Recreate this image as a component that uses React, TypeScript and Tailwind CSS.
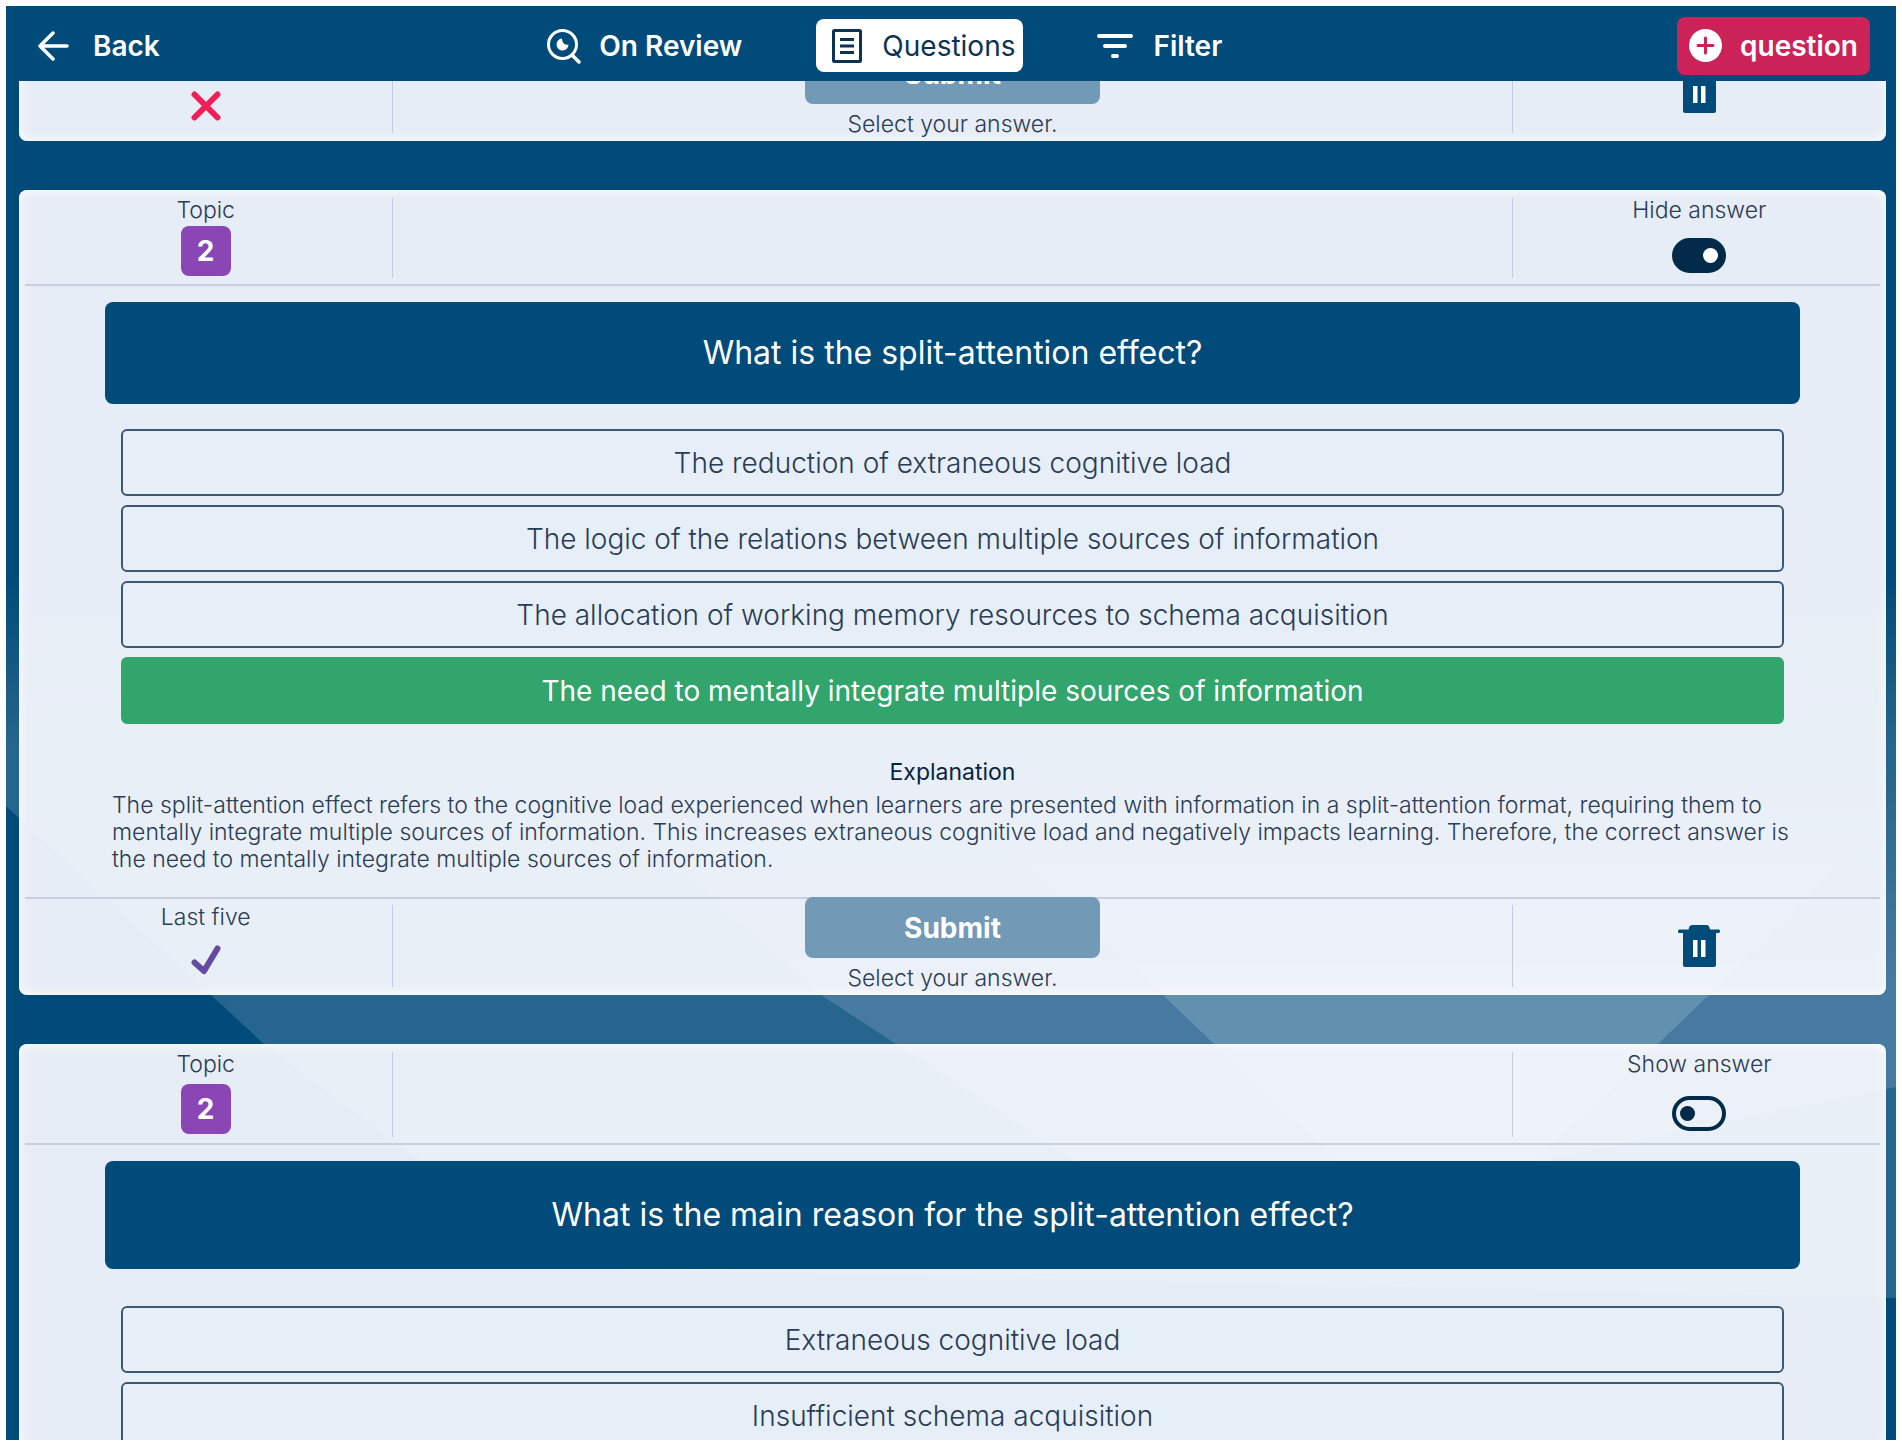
import { useState } from 'react';
import type { ReactNode } from 'react';

type Question = {
  id: number;
  topic: number;
  text: string;
  answers: string[];
  correct: number;
  explanation: string;
  lastFive: boolean;
};

const QUESTIONS: Question[] = [
  {
    id: 1,
    topic: 2,
    text: 'What is the split-attention effect?',
    answers: [
      'The reduction of extraneous cognitive load',
      'The logic of the relations between multiple sources of information',
      'The allocation of working memory resources to schema acquisition',
      'The need to mentally integrate multiple sources of information',
    ],
    correct: 3,
    explanation:
      'The split-attention effect refers to the cognitive load experienced when learners are presented with information in a split-attention format, requiring them to mentally integrate multiple sources of information. This increases extraneous cognitive load and negatively impacts learning. Therefore, the correct answer is the need to mentally integrate multiple sources of information.',
    lastFive: true,
  },
  {
    id: 2,
    topic: 2,
    text: 'What is the main reason for the split-attention effect?',
    answers: ['Extraneous cognitive load', 'Insufficient schema acquisition'],
    correct: 0,
    explanation: '',
    lastFive: true,
  },
];

function ReviewIcon() {
  return (
    <svg width="34" height="36" viewBox="0 0 34 36" fill="none" stroke="currentColor" strokeWidth="3">
      <circle cx="15.500" cy="16.500" r="14" />
      <path d="M25 27l7 7" strokeWidth="3.500" strokeLinecap="round" />
      <path d="M15 10.500a6 6 0 1 0 6.500 6c-3.500 1-6.500-1.500-6.500-6z" fill="currentColor" stroke="none" />
    </svg>
  );
}

function ListIcon() {
  return (
    <svg width="30" height="34" viewBox="0 0 30 34" fill="none" stroke="currentColor" strokeWidth="3">
      <rect x="1.500" y="1.500" width="27" height="31" rx="1" />
      <path d="M8 10.500h14M8 17h14M8 23.500h14" />
    </svg>
  );
}

function FilterIcon() {
  return (
    <svg width="36" height="26" viewBox="0 0 36 26" fill="none" stroke="currentColor" strokeWidth="4" strokeLinecap="round">
      <path d="M2 3h32M8 13h20M16 23h4" />
    </svg>
  );
}

function TrashIcon() {
  return (
    <svg width="42" height="42" viewBox="0 0 42 42" fill="currentColor">
      <path d="M11 2.500Q11.500 0 14 0h15q2 0 2.500 2.500L32 4.500h9q1 0 1 1.500t-1 2h-3v32q0 2-2 2H7q-2 0-2-2V8H1Q0 8 0 6.500t1-2h9.500z" />
      <path d="M15 15h4.500v17H15zM23 15h4.500v17H23z" fill="#fff" />
    </svg>
  );
}

function CheckIcon() {
  return (
    <svg width="30" height="30" viewBox="0 0 30 30" fill="none" stroke="#6549a4" strokeWidth="6" strokeLinecap="round" strokeLinejoin="round">
      <path d="M3.500 17.500L13 26 26.500 3.500" />
    </svg>
  );
}

function CrossIcon() {
  return (
    <svg width="30" height="30" viewBox="0 0 30 30" fill="none" stroke="#f01f57" strokeWidth="6" strokeLinecap="round">
      <path d="M3.500 3.500l23 23M26.500 3.500l-23 23" />
    </svg>
  );
}

function Backdrop() {
  return (
    <svg
      className="absolute inset-0 h-full w-full"
      viewBox="0 0 1890 1434"
      preserveAspectRatio="none"
      aria-hidden="true"
    >
      <defs>
        <linearGradient id="fade-low" gradientUnits="userSpaceOnUse" x1="0" y1="570" x2="0" y2="740">
          <stop offset="0" stopColor="#26658d" stopOpacity="0" />
          <stop offset="1" stopColor="#26658d" />
        </linearGradient>
        <linearGradient id="fade-mid" gradientUnits="userSpaceOnUse" x1="0" y1="760" x2="0" y2="970">
          <stop offset="0" stopColor="#467aa0" stopOpacity="0" />
          <stop offset="1" stopColor="#467aa0" />
        </linearGradient>
        <linearGradient id="fade-high" gradientUnits="userSpaceOnUse" x1="0" y1="800" x2="0" y2="980">
          <stop offset="0" stopColor="#6290af" stopOpacity="0" />
          <stop offset="1" stopColor="#6290af" />
        </linearGradient>
      </defs>
      <path d="M0 570V800L205 989 258 1038 560 1262 1890 1292V570z" fill="url(#fade-low)" />
      <path d="M560 760L815 989 890 1038 1180 1230 1890 1081V760z" fill="url(#fade-mid)" />
      <path d="M960 800L1157 989 1208 1038 1430 1250 1652 1038 1703 989 1890 800z" fill="url(#fade-high)" />
    </svg>
  );
}

// Three column strip used for the top and bottom of every card
function Strip({ left, middle, right }: { left: ReactNode; middle?: ReactNode; right: ReactNode }) {
  return (
    <>
      <div className="flex w-1/5 flex-col items-center">{left}</div>
      <div className="my-2 w-px bg-[#c3cddd]" />
      <div className="flex flex-1 flex-col items-center">{middle}</div>
      <div className="my-2 w-px bg-[#c3cddd]" />
      <div className="flex w-1/5 flex-col items-center">{right}</div>
    </>
  );
}

function CardFooter({ lastFive }: { lastFive: boolean }) {
  return (
    <div className="bg-[linear-gradient(#c6d0df,#c6d0df)] bg-[length:calc(100%-12px)_2px] bg-top bg-no-repeat">
      <div className="flex h-[98px]">
        <Strip
          left={
            <>
              <span className="mt-1 mb-3 text-[23px] leading-8 font-light">Last five</span>
              {lastFive ? <CheckIcon /> : <CrossIcon />}
            </>
          }
          middle={
            <>
              <button type="button" className="h-[61px] w-[295px] rounded-lg bg-[#7299b6] text-[28px] font-bold text-white">
                Submit
              </button>
              <span className="mt-1 text-[23px] leading-8 font-light">Select your answer.</span>
            </>
          }
          right={
            <button type="button" aria-label="Delete question" className="mt-7 text-[#004b7a]">
              <TrashIcon />
            </button>
          }
        />
      </div>
    </div>
  );
}

function QuestionCard({ question, initialOpen }: { question: Question; initialOpen: boolean }) {
  const [open, setOpen] = useState(initialOpen);

  return (
    <article className="overflow-hidden rounded-lg bg-[#f9faff]/93 shadow-[inset_0_0_12px_#fff]">
      <div className="bg-[linear-gradient(#c6d0df,#c6d0df)] bg-[length:calc(100%-12px)_2px] bg-bottom bg-no-repeat">
        <div className={`flex ${open ? 'h-24' : 'h-[101px]'}`}>
          <Strip
            left={
              <>
                <span className="mt-1 text-[23px] leading-8 font-light">Topic</span>
                <span
                  className={`flex size-[50px] items-center justify-center rounded-lg bg-[#8a46b4] text-[28px] font-bold text-white ${
                    open ? '' : 'mt-1'
                  }`}
                >
                  {question.topic}
                </span>
              </>
            }
            right={
              <label className="flex cursor-pointer flex-col items-center">
                <span className="mt-1 text-[23px] leading-8 font-light">{open ? 'Hide answer' : 'Show answer'}</span>
                <input type="checkbox" className="peer sr-only" checked={open} onChange={() => setOpen(!open)} />
                <span
                  className={`flex h-[35px] w-[54px] items-center rounded-full border-4 border-[#022b49] px-1 ${
                    open ? 'mt-3 justify-end bg-[#022b49]' : 'mt-4'
                  }`}
                >
                  <span className={`size-[15px] rounded-full ${open ? 'bg-white' : 'bg-[#022b49]'}`} />
                </span>
              </label>
            }
          />
        </div>
      </div>

      <div className="px-[86px] pt-4">
        <h2
          className={`flex items-center justify-center rounded-lg bg-[#004b7a] text-[32px] text-white ${
            open ? 'mb-[25px] h-[102px]' : 'mb-[37px] h-[108px]'
          }`}
        >
          {question.text}
        </h2>
        <div className="mx-4 flex flex-col gap-[9px]">
          {question.answers.map((answer, i) => (
            <button
              key={answer}
              type="button"
              className={`h-[67px] rounded-md border-2 text-[28px] ${
                open && i === question.correct
                  ? 'border-[#31a56b] bg-[#31a56b] text-white'
                  : 'border-[#3d5873] bg-[#e6effa]/60 font-light'
              }`}
            >
              {answer}
            </button>
          ))}
        </div>
      </div>

      {open && question.explanation && (
        <div className="px-[93px] pt-8 pb-6">
          <h3 className="text-center text-[23px] leading-8 text-[#0a2440]">Explanation</h3>
          <p className="pt-1 text-[23px] leading-[27px] font-light">{question.explanation}</p>
        </div>
      )}

      {open && <CardFooter lastFive={question.lastFive} />}
    </article>
  );
}

export default function App() {
  return (
    <div className="h-screen bg-white p-[6px] font-['Inter',sans-serif] text-[#2b3c55]">
      <div className="relative flex h-full flex-col overflow-hidden bg-[#004b7a]">
        <Backdrop />

        <header className="relative z-10 flex h-[75px] shrink-0 items-center bg-[#004b7a] pt-1 pr-[26px] pl-8 text-[28px] font-semibold text-white">
          <a href="#back" className="flex w-[27.8%] items-center gap-6">
            <svg width="31" height="30" viewBox="0 0 31 30" fill="none" stroke="currentColor" strokeWidth="3.500" strokeLinecap="round" strokeLinejoin="round">
              <path d="M29 15H2M15 2L2 15l13 13" />
            </svg>
            Back
          </a>
          <nav className="flex items-center gap-[74px]">
            <button type="button" className="flex items-center gap-[18px]">
              <ReviewIcon />
              On Review
            </button>
            <button type="button" className="flex h-[53px] items-center gap-5 rounded-lg bg-white pr-2 pl-4 font-normal text-[#0b3357]">
              <ListIcon />
              Questions
            </button>
            <button type="button" className="flex items-center gap-5">
              <FilterIcon />
              Filter
            </button>
          </nav>
          <div className="flex flex-1 justify-end">
            <button type="button" className="flex h-[58px] items-center gap-[18px] rounded-lg bg-[#cb2257] px-3">
              <svg width="33" height="33" viewBox="0 0 33 33">
                <circle cx="16.500" cy="16.500" r="16.500" fill="#fff" />
                <path d="M16.500 9v15M9 16.500h15" stroke="#cb2257" strokeWidth="3" strokeLinecap="round" />
              </svg>
              question
            </button>
          </div>
        </header>

        {/* Scrolled list, the first card is partly under the header */}
        <main className="relative flex min-h-0 flex-1 flex-col overflow-hidden pr-[10px] pl-[13px]">
          <div className="-mt-[38px] flex flex-col gap-[49px]">
            <article className="rounded-lg bg-[#f9faff]/93 shadow-[inset_0_0_12px_#fff]">
              <CardFooter lastFive={false} />
            </article>
            {QUESTIONS.map((q, i) => (
              <QuestionCard key={q.id} question={q} initialOpen={i === 0} />
            ))}
          </div>
        </main>
      </div>
    </div>
  );
}
